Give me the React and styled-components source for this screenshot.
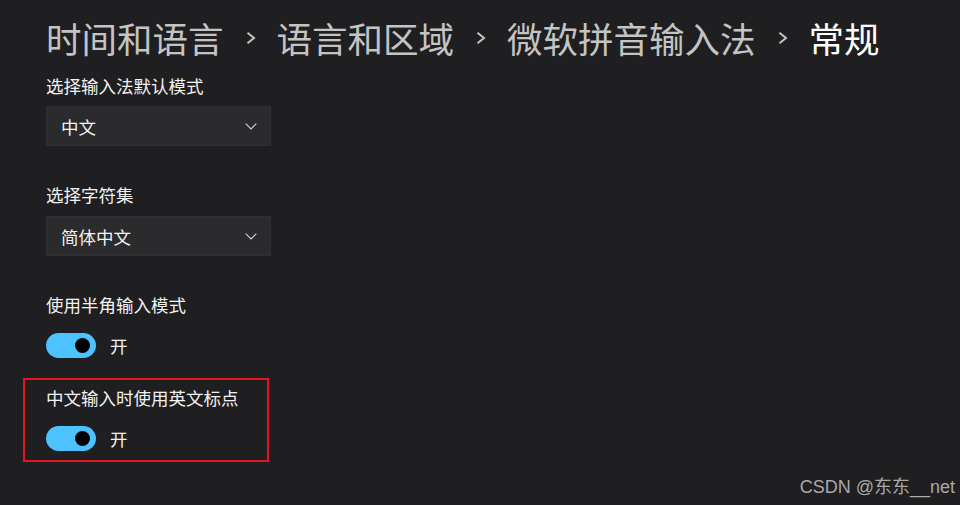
import React from "react";
import styled, { createGlobalStyle } from "styled-components";

const Global = createGlobalStyle`
  html, body { margin: 0; padding: 0; background: #1f1f21; }
  body { font-family: "Noto Sans CJK SC", "Noto Sans", sans-serif; }
`;

const Page = styled.div`
  position: relative;
  width: 960px;
  height: 505px;
  box-sizing: border-box;
  padding: 20px 0 0 46px;
  background: #1f1f21;
  overflow: hidden;
`;

const Breadcrumb = styled.h1`
  margin: 0;
  display: flex;
  align-items: center;
  height: 36px;
  font-size: 35.5px;
  line-height: 36px;
  font-weight: 400;
`;

const Crumb = styled.span`
  color: ${(p) => (p.$current ? "#ffffff" : "#c4c4c4")};
  white-space: nowrap;
`;

const Sep = styled.svg`
  width: 10px;
  height: 12px;
  margin: 0 21px 0 22px;
  flex: none;
`;

const Content = styled.div`
  display: flex;
  flex-direction: column;
  margin-top: 19px;
`;

const Section = styled.section`
  position: relative;
  display: flex;
  flex-direction: column;
  margin-bottom: ${(p) => p.$gap}px;
  ${(p) =>
    p.$highlight &&
    `
    &::after {
      content: "";
      position: absolute;
      left: -23px;
      top: -9px;
      width: 246px;
      height: 84px;
      border: 2px solid #e3161f;
      box-sizing: border-box;
      pointer-events: none;
    }
  `}
`;

const Label = styled.div`
  font-size: 17.5px;
  line-height: 22px;
  color: #f2f2f2;
  margin-bottom: ${(p) => p.$gap}px;
`;

const Select = styled.div`
  width: 225px;
  height: 40px;
  box-sizing: border-box;
  display: flex;
  align-items: center;
  justify-content: space-between;
  padding: 0 13px 0 14px;
  background: #2b2b2e;
  border: 1px solid #303033;
  color: #f2f2f2;
  font-size: 17.5px;
`;

const Chevron = styled.svg`
  width: 12px;
  height: 7px;
`;

const ToggleRow = styled.div`
  display: flex;
  align-items: center;
  height: 25px;
  gap: 14px;
  color: #f2f2f2;
  font-size: 17.5px;
`;

const Track = styled.div`
  width: 50px;
  height: 25px;
  border-radius: 13px;
  background: #4cc2ff;
  display: flex;
  align-items: center;
  justify-content: flex-end;
  padding-right: 6px;
  box-sizing: border-box;
`;

const Knob = styled.div`
  width: 15px;
  height: 15px;
  border-radius: 50%;
  background: #000;
`;

const Watermark = styled.div`
  position: absolute;
  right: 5px;
  bottom: 7px;
  font-family: "Liberation Sans", "Noto Sans CJK SC", sans-serif;
  font-size: 18px;
  color: #a9a9a9;
  white-space: nowrap;
`;

const SepIcon = () => (
  <Sep viewBox="0 0 10 12">
    <path d="M1.5 0.8 L8 6 L1.5 11.2" fill="none" stroke="#c4c4c4" strokeWidth="2" />
  </Sep>
);

const Dropdown = ({ value }) => (
  <Select>
    <span>{value}</span>
    <Chevron viewBox="0 0 12 7">
      <path d="M0.7 0.7 L6 6 L11.3 0.7" fill="none" stroke="#d0d0d0" strokeWidth="1.2" />
    </Chevron>
  </Select>
);

const Toggle = ({ label }) => (
  <ToggleRow>
    <Track>
      <Knob />
    </Track>
    <span>{label}</span>
  </ToggleRow>
);

export default function App() {
  const crumbs = ["时间和语言", "语言和区域", "微软拼音输入法"];
  return (
    <>
      <Global />
      <Page>
        <Breadcrumb>
          {crumbs.map((c) => (
            <React.Fragment key={c}>
              <Crumb>{c}</Crumb>
              <SepIcon />
            </React.Fragment>
          ))}
          <Crumb $current>常规</Crumb>
        </Breadcrumb>
        <Content>
          <Section $gap={38}>
            <Label $gap={9}>选择输入法默认模式</Label>
            <Dropdown value="中文" />
          </Section>
          <Section $gap={38}>
            <Label $gap={10}>选择字符集</Label>
            <Dropdown value="简体中文" />
          </Section>
          <Section $gap={29}>
            <Label $gap={17}>使用半角输入模式</Label>
            <Toggle label="开" />
          </Section>
          <Section $gap={0} $highlight>
            <Label $gap={17}>中文输入时使用英文标点</Label>
            <Toggle label="开" />
          </Section>
        </Content>
        <Watermark>CSDN @东东__net</Watermark>
      </Page>
    </>
  );
}
